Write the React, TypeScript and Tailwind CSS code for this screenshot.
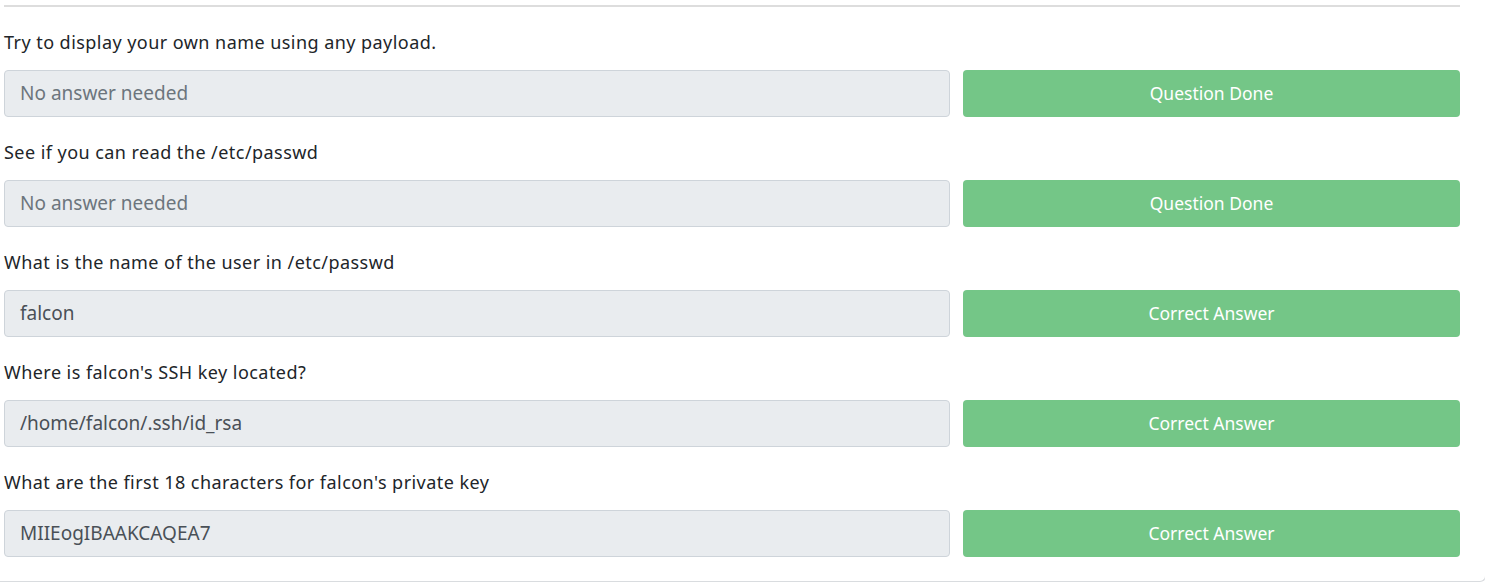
import React from 'react';

type Question = {
    text: string;
    answer?: string;
    done: string;
};

const questions: Question[] = [
    { text: 'Try to display your own name using any payload.', done: 'Question Done' },
    { text: 'See if you can read the /etc/passwd', done: 'Question Done' },
    { text: 'What is the name of the user in /etc/passwd', answer: 'falcon', done: 'Correct Answer' },
    { text: "Where is falcon's SSH key located?", answer: '/home/falcon/.ssh/id_rsa', done: 'Correct Answer' },
    { text: "What are the first 18 characters for falcon's private key", answer: 'MIIEogIBAAKCAQEA7', done: 'Correct Answer' },
];

const QuestionRow: React.FC<{ q: Question }> = ({ q }) => (
    <div className="flex flex-col">
        <p className="h-[24px] leading-[24px] text-[18px] tracking-[0.45px] text-[#212529]">{q.text}</p>
        <div className="flex items-start gap-[13px] mt-[16px]">
            <div className="w-[946px] h-[47px] flex items-center px-[15px] bg-[#e9ecef] border border-[#ced4da] rounded-[4px] text-[19px]">
                {q.answer ? (
                    <span className="text-[#495057]">{q.answer}</span>
                ) : (
                    <span className="text-[#6c757d]">No answer needed</span>
                )}
            </div>
            <button className="w-[497px] h-[47px] flex items-center justify-center bg-[#74c687] text-white text-[17.5px] rounded-[4px]">
                {q.done}
            </button>
        </div>
    </div>
);

export default function App() {
    return (
        <div className="w-full h-[584px] overflow-hidden bg-white" style={{ fontFamily: '"Noto Sans", "Open Sans", sans-serif' }}>
            <div className="w-full pl-[4px]">
                <div className="w-[1456px] h-[2px] bg-[#dddddd] mt-[5px]" />
                <div className="flex flex-col gap-[23px] mt-[23px]">
                    {questions.map((q, i) => (
                        <QuestionRow key={i} q={q} />
                    ))}
                </div>
            </div>
            {/* card bottom edge */}
            <div className="w-[1486px] h-[25px] border-b border-r border-[#d9dcdf] rounded-br-[6px]" />
        </div>
    );
}
